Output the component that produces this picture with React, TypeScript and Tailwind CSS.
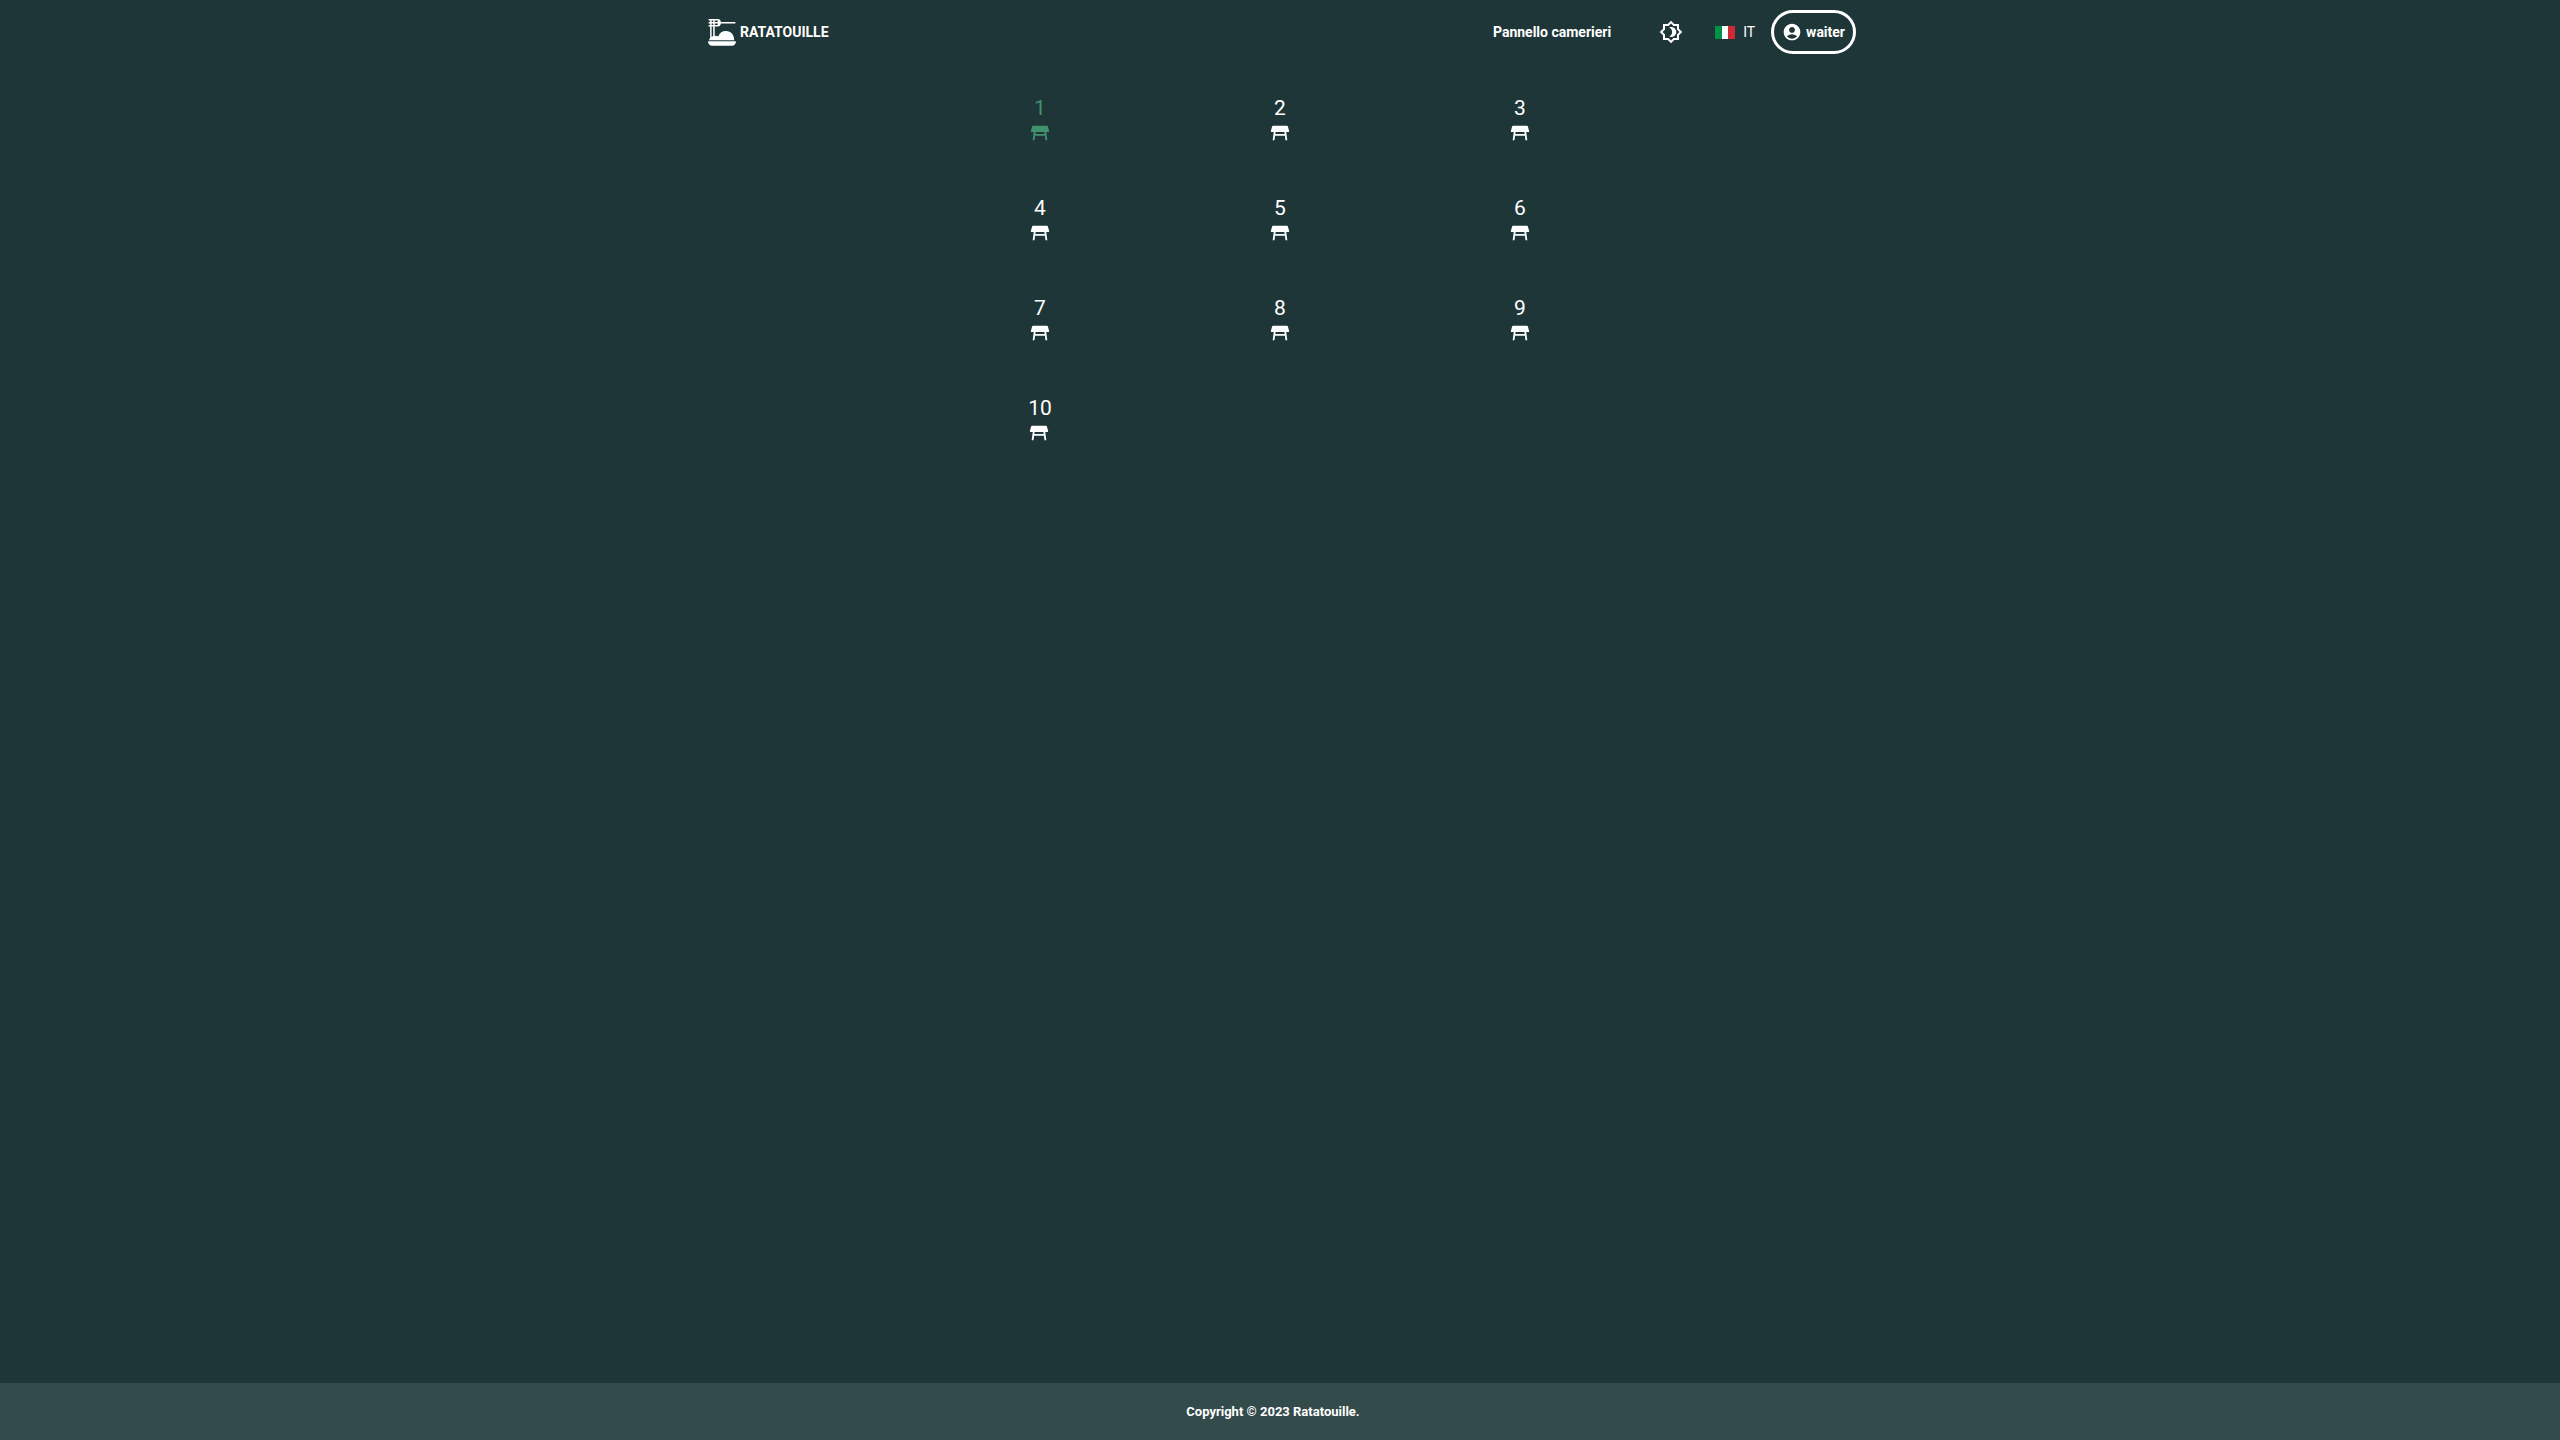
import { MdAccountCircle, MdOutlineBrightness4, MdTableRestaurant } from "react-icons/md";

const tables = [1, 2, 3, 4, 5, 6, 7, 8, 9, 10];

function Logo() {
  return (
    <svg viewBox="2.6 2.4 18.4 18.4" className="size-7" fill="currentColor" aria-hidden="true">
      <path d="M3 3h6a2.100 2.100 0 0 1 2 2h9.600v1H11a2.100 2.100 0 0 1-2 2H3V7h6V6H3V5h6V4H3z" />
      <path d="M4 3h1v13H4zM6 3h1v12H6z" />
      <path d="M3.200 17c.6-2 2.200-3 4.200-3 .7 0 1.400.1 2 .4a5.300 5.300 0 0 1 5.100-3.400c3.100 0 5.400 2.500 5.300 6z" />
      <path d="M2.900 17.600h17.800c.2 0 .3.200.3.400-.3 1.700-1.300 2.600-2.600 2.600H5.200c-1.300 0-2.300-.9-2.600-2.600 0-.2.100-.4.300-.4z" />
    </svg>
  );
}

function ItalianFlag() {
  return (
    <svg viewBox="0 0 20 13" className="h-[13px] w-5" aria-hidden="true">
      <path fill="#009246" d="M0 0h7v13H0z" />
      <path fill="#fff" d="M7 0h6v13H7z" />
      <path fill="#ce2b37" d="M13 0h7v13h-7z" />
    </svg>
  );
}

export default function App() {
  return (
    <div className="flex min-h-screen flex-col bg-[#1f3638] font-[Roboto,sans-serif] text-white">
      <header className="mx-auto flex h-16 w-full max-w-[1152px] items-center justify-between pl-1">
        <a href="#" className="flex items-center gap-1 text-sm font-bold">
          <Logo />
          RATATOUILLE
        </a>
        <nav className="flex items-center">
          <a href="#" className="mr-12 text-sm font-bold">Pannello camerieri</a>
          <button type="button" aria-label="Tema" className="mr-8">
            <MdOutlineBrightness4 className="size-6" />
          </button>
          <button type="button" className="mr-4 flex items-center gap-2 text-sm">
            <ItalianFlag />
            IT
          </button>
          <button type="button" className="flex h-11 items-center gap-1 rounded-full border-3 border-white px-2 text-sm font-bold">
            <MdAccountCircle className="size-5" />
            waiter
          </button>
        </nav>
      </header>
      <main className="mx-auto grid w-full max-w-[720px] grow grid-cols-3 content-start pt-[30px]">
        {tables.map((n) => (
          <div key={n} className="flex h-[100px] justify-center">
            <button
              type="button"
              disabled={n === 1}
              className="flex h-14 flex-col items-start text-[21px] leading-7 disabled:text-[#40916c]"
            >
              <span className="min-w-[22px] text-center">{n}</span>
              <MdTableRestaurant className="size-[22px]" />
            </button>
          </div>
        ))}
      </main>
      <footer className="flex h-[57px] items-center justify-center bg-[#344b4c] pr-3.5 text-[13px] font-bold">
        Copyright © 2023 Ratatouille.
      </footer>
    </div>
  );
}
